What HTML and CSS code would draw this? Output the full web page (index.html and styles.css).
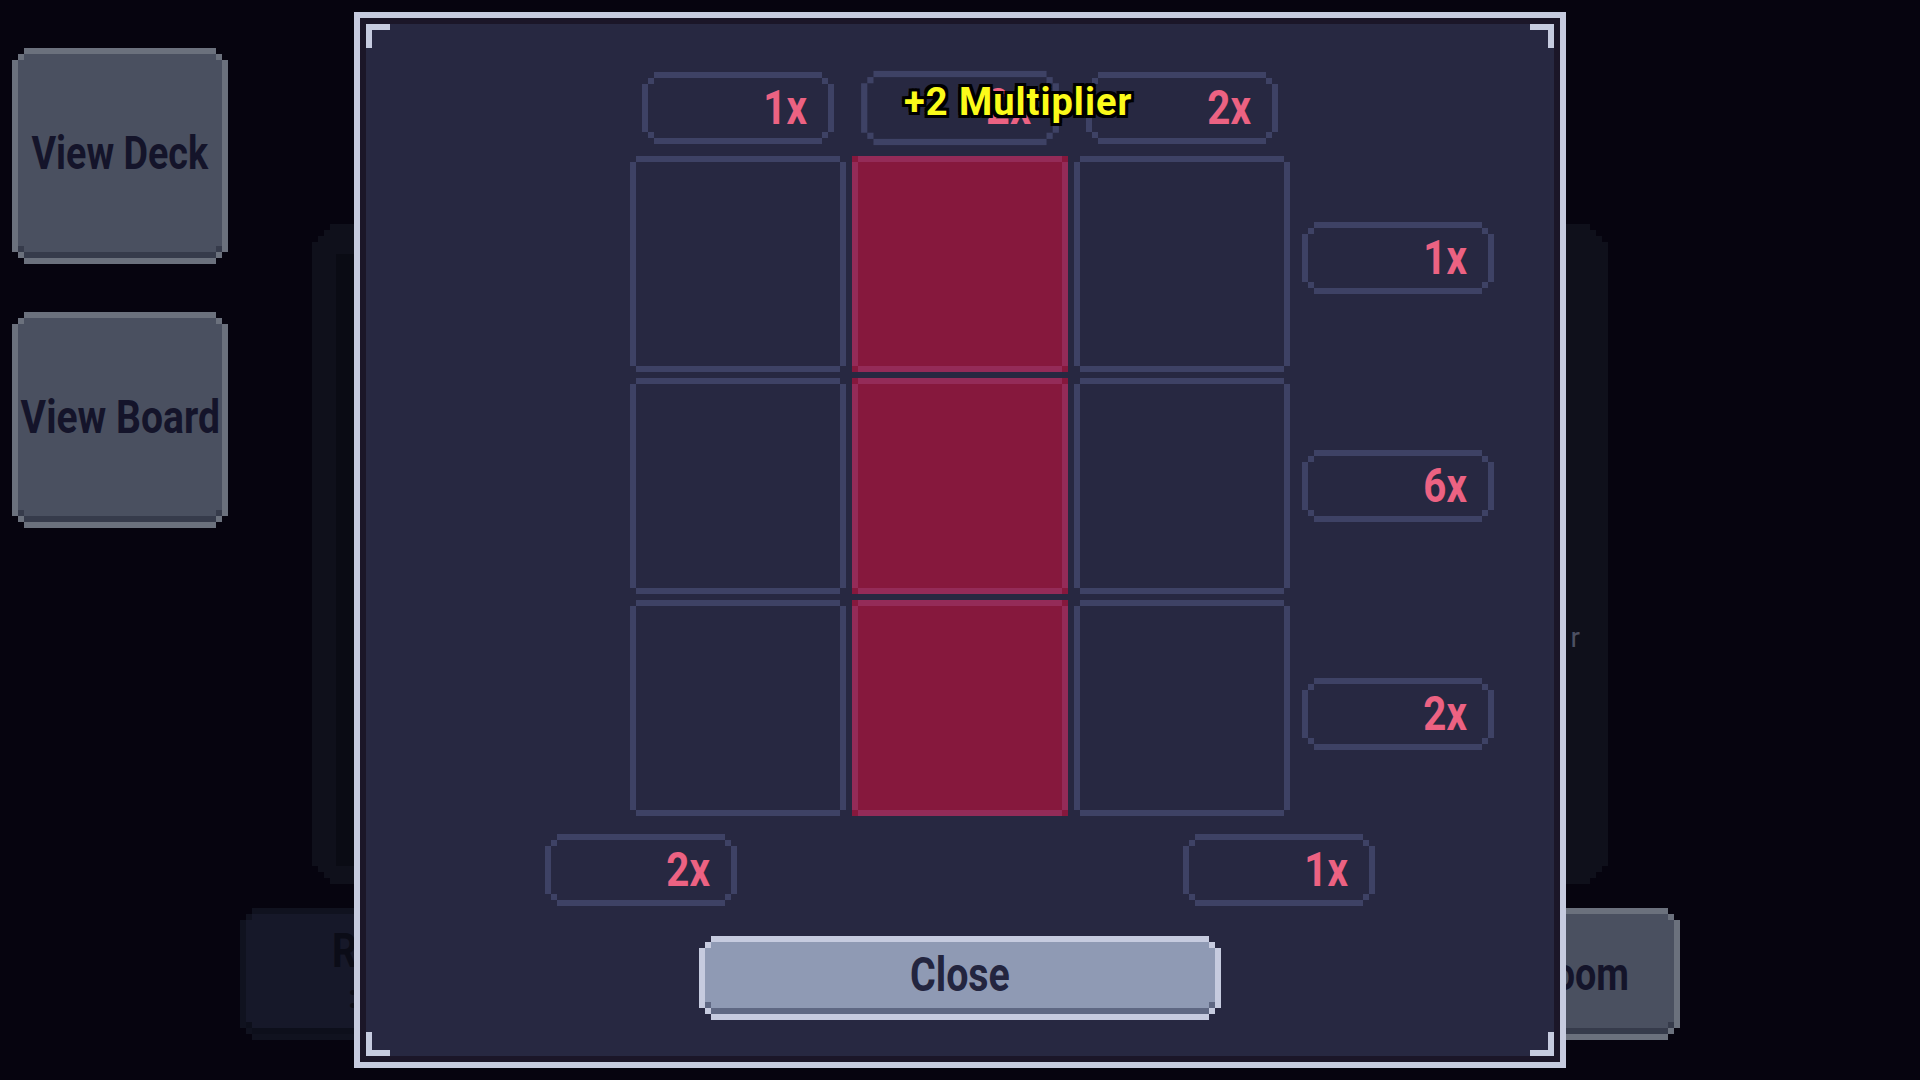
FILE: index.html
```html
<!DOCTYPE html>
<html lang="en">
<head>
<meta charset="utf-8">
<title>Board Multipliers</title>
<link rel="stylesheet" href="styles.css">
</head>
<body>
<div class="game">
  <aside class="sidebar">
    <div class="pxbtn side-btn"><span class="lbl">View Deck</span></div>
    <div class="pxbtn side-btn"><span class="lbl">View Board</span></div>
  </aside>
  <main class="center">
    <section class="panel">
      <div class="panel-slot"></div>
      <p class="panel-note">Multiplier</p>
    </section>
    <div class="actions">
      <div class="pxbtn act-btn act-left"><span class="lbl">Reroll</span><span class="sub">: 3 gold</span></div>
      <div class="pxbtn act-btn act-right"><span class="lbl">Next Room</span></div>
    </div>
  </main>
</div>

<div class="modal">
  <div class="board">
    <div class="pill top k1"><span class="mult">1x</span></div>
    <div class="pill top k2 pop"><span class="mult">2x</span></div>
    <div class="pill top k3"><span class="mult">2x</span></div>

    <div class="cell r1 k1"></div>
    <div class="cell red r1 k2"></div>
    <div class="cell r1 k3"></div>
    <div class="pill side r1 first"><span class="mult">1x</span></div>

    <div class="cell r2 k1"></div>
    <div class="cell red r2 k2"></div>
    <div class="cell r2 k3"></div>
    <div class="pill side r2"><span class="mult">6x</span></div>

    <div class="cell r3 k1"></div>
    <div class="cell red r3 k2"></div>
    <div class="cell r3 k3"></div>
    <div class="pill side r3 last"><span class="mult">2x</span></div>

    <div class="diag-row">
      <div class="pill"><span class="mult">2x</span></div>
      <div class="pill"><span class="mult">1x</span></div>
    </div>

    <div class="pxbtn close-btn"><span class="lbl">Close</span></div>

    <div class="float-text">+2 Multiplier</div>
  </div>
</div>
</body>
</html>
```

FILE: styles.css
```css
html, body {
  margin: 0;
  padding: 0;
}

body {
  width: 1920px;
  height: 1080px;
  overflow: hidden;
  position: relative;
  background: #06040f;
  font-family: Roboto, "Liberation Sans", sans-serif;
  font-weight: 700;
}

/* ---------- pixel button (stepped corners, bottom shade) ---------- */
.pxbtn {
  --b: #6b717d;
  --f: #4a5060;
  --d: #363b4b;
  box-sizing: border-box;
  display: flex;
  align-items: center;
  justify-content: center;
  padding-bottom: 6px;
  color: #14142a;
  font-size: 46px;
  line-height: 1;
  white-space: nowrap;
  background:
    linear-gradient(var(--b), var(--b)) left 12px top 0 / calc(100% - 24px) 6px no-repeat,
    linear-gradient(var(--b), var(--b)) left 12px bottom 0 / calc(100% - 24px) 6px no-repeat,
    linear-gradient(var(--b), var(--b)) left 0 top 12px / 6px calc(100% - 24px) no-repeat,
    linear-gradient(var(--b), var(--b)) right 0 top 12px / 6px calc(100% - 24px) no-repeat,
    linear-gradient(var(--b), var(--b)) left 6px top 6px / 6px 6px no-repeat,
    linear-gradient(var(--b), var(--b)) right 6px top 6px / 6px 6px no-repeat,
    linear-gradient(var(--b), var(--b)) left 6px bottom 6px / 6px 6px no-repeat,
    linear-gradient(var(--b), var(--b)) right 6px bottom 6px / 6px 6px no-repeat,
    linear-gradient(var(--d), var(--d)) left 12px bottom 6px / calc(100% - 24px) 6px no-repeat,
    linear-gradient(var(--d), var(--d)) left 6px bottom 12px / 6px 6px no-repeat,
    linear-gradient(var(--d), var(--d)) right 6px bottom 12px / 6px 6px no-repeat,
    linear-gradient(var(--f), var(--f)) left 12px top 6px / calc(100% - 24px) calc(100% - 12px) no-repeat,
    linear-gradient(var(--f), var(--f)) left 6px top 12px / calc(100% - 12px) calc(100% - 24px) no-repeat;
}

.lbl {
  display: inline-block;
  transform: scaleX(0.82);
}

/* ---------- background game screen ---------- */
.game {
  display: flex;
  height: 1080px;
}

.sidebar {
  width: 240px;
  box-sizing: border-box;
  padding: 48px 0 0 12px;
  display: flex;
  flex-direction: column;
  gap: 48px;
}

.side-btn {
  width: 216px;
  height: 216px;
}

.side-btn + .side-btn .lbl {
  transform: scaleX(0.85);
}

.center {
  width: 1440px;
  box-sizing: border-box;
  padding-top: 224px;
  display: flex;
  flex-direction: column;
}

.panel {
  margin: 0 0 0 72px;
  width: 1296px;
  height: 660px;
  box-sizing: border-box;
  padding: 30px 0 18px 24px;
  display: flex;
  align-items: flex-start;
  background: #0f101b;
  clip-path: polygon(
    18px 0, calc(100% - 18px) 0,
    calc(100% - 18px) 6px, calc(100% - 12px) 6px,
    calc(100% - 12px) 12px, calc(100% - 6px) 12px,
    calc(100% - 6px) 18px, 100% 18px,
    100% calc(100% - 18px), calc(100% - 6px) calc(100% - 18px),
    calc(100% - 6px) calc(100% - 12px), calc(100% - 12px) calc(100% - 12px),
    calc(100% - 12px) calc(100% - 6px), calc(100% - 18px) calc(100% - 6px),
    calc(100% - 18px) 100%, 18px 100%,
    18px calc(100% - 6px), 12px calc(100% - 6px),
    12px calc(100% - 12px), 6px calc(100% - 12px),
    6px calc(100% - 18px), 0 calc(100% - 18px),
    0 18px, 6px 18px,
    6px 12px, 12px 12px,
    12px 6px, 18px 6px);
}

.panel-slot {
  align-self: stretch;
  width: 600px;
  background: #0a0b14;
}

.panel-note {
  margin: 370px 23px 0 auto;
  font-size: 28px;
  line-height: 1;
  font-weight: 400;
  letter-spacing: 5px;
  color: #4d5062;
}

.actions {
  margin-top: 24px;
  display: flex;
  justify-content: space-between;
}

.act-btn {
  width: 300px;
  height: 132px;
}

.act-left {
  --b: #10121f;
  --f: #161829;
  --d: #0d0f1b;
  color: #0b0c17;
  flex-direction: column;
  align-items: flex-start;
  justify-content: flex-start;
  padding: 19px 0 0 92px;
}

.act-left .lbl {
  font-size: 48px;
  transform-origin: left center;
}

.act-left .sub {
  font-size: 34px;
  line-height: 1;
  margin-top: 4px;
  padding-left: 16px;
}

.act-right {
  justify-content: flex-end;
  padding: 0 51px 0 0;
}

.act-right .lbl {
  transform-origin: right center;
}

/* ---------- modal ---------- */
.modal {
  position: absolute;
  left: 354px;
  top: 12px;
  width: 1212px;
  height: 1056px;
  box-sizing: border-box;
  border: 6px solid #c6cbdf;
  box-shadow: inset 0 0 0 6px #1b1628;
  padding: 54px 0 0 270px;
  --l: #c6cbdf;
  background:
    linear-gradient(var(--l), var(--l)) left 6px top 6px / 24px 6px no-repeat,
    linear-gradient(var(--l), var(--l)) left 6px top 6px / 6px 24px no-repeat,
    linear-gradient(var(--l), var(--l)) right 6px top 6px / 24px 6px no-repeat,
    linear-gradient(var(--l), var(--l)) right 6px top 6px / 6px 24px no-repeat,
    linear-gradient(var(--l), var(--l)) left 6px bottom 6px / 24px 6px no-repeat,
    linear-gradient(var(--l), var(--l)) left 6px bottom 6px / 6px 24px no-repeat,
    linear-gradient(var(--l), var(--l)) right 6px bottom 6px / 24px 6px no-repeat,
    linear-gradient(var(--l), var(--l)) right 6px bottom 6px / 6px 24px no-repeat,
    #272841;
}

.board {
  position: relative;
  width: 864px;
  display: grid;
  grid-template-columns: 216px 6px 216px 6px 216px 12px 192px;
  grid-template-rows: 72px 12px 216px 6px 216px 6px 216px 18px 72px 30px 84px;
}

.k1 { grid-column: 1; }
.k2 { grid-column: 3; }
.k3 { grid-column: 5; }
.r1 { grid-row: 3; }
.r2 { grid-row: 5; }
.r3 { grid-row: 7; }

/* cells */
.cell {
  --c: #3e4265;
  width: 216px;
  height: 216px;
  background:
    linear-gradient(var(--c), var(--c)) left 6px top 0 / calc(100% - 12px) 6px no-repeat,
    linear-gradient(var(--c), var(--c)) left 6px bottom 0 / calc(100% - 12px) 6px no-repeat,
    linear-gradient(var(--c), var(--c)) left 0 top 6px / 6px calc(100% - 12px) no-repeat,
    linear-gradient(var(--c), var(--c)) right 0 top 6px / 6px calc(100% - 12px) no-repeat;
}

.cell.red {
  --c: #942b58;
  background-color: #86183d;
}

/* multiplier pills */
.pill {
  --c: #3e4265;
  width: 192px;
  height: 72px;
  box-sizing: border-box;
  display: flex;
  align-items: center;
  justify-content: flex-end;
  padding-right: 27px;
  background:
    linear-gradient(var(--c), var(--c)) left 12px top 0 / calc(100% - 24px) 6px no-repeat,
    linear-gradient(var(--c), var(--c)) left 12px bottom 0 / calc(100% - 24px) 6px no-repeat,
    linear-gradient(var(--c), var(--c)) left 0 top 12px / 6px calc(100% - 24px) no-repeat,
    linear-gradient(var(--c), var(--c)) right 0 top 12px / 6px calc(100% - 24px) no-repeat,
    linear-gradient(var(--c), var(--c)) left 6px top 6px / 6px 6px no-repeat,
    linear-gradient(var(--c), var(--c)) right 6px top 6px / 6px 6px no-repeat,
    linear-gradient(var(--c), var(--c)) left 6px bottom 6px / 6px 6px no-repeat,
    linear-gradient(var(--c), var(--c)) right 6px bottom 6px / 6px 6px no-repeat;
}

.mult {
  display: inline-block;
  font-size: 48px;
  line-height: 1;
  color: #ec6282;
  transform: scaleX(0.84);
  transform-origin: right center;
}

.pill.top {
  grid-row: 1;
  justify-self: center;
}

.pill.pop {
  transform: scale(1.03);
}

.pill.side {
  grid-column: 7;
  align-self: center;
}

.pill.side.first { margin-bottom: 12px; }
.pill.side.last { margin-top: 12px; }

.diag-row {
  grid-row: 9;
  grid-column: 1 / 6;
  margin: 0 -85px;
  display: flex;
  justify-content: space-between;
}

.close-btn {
  --b: #c6cbdf;
  --f: #8f9ab4;
  --d: #5f6883;
  grid-row: 11;
  grid-column: 1 / 6;
  justify-self: center;
  width: 522px;
  height: 84px;
  color: #23253f;
  font-size: 48px;
}

.float-text {
  position: absolute;
  left: 274px;
  top: 11px;
  font-size: 38px;
  line-height: 1;
  letter-spacing: 1px;
  white-space: nowrap;
  color: #fbfb1a;
  text-shadow:
    3px 0 0 #000, -3px 0 0 #000, 0 3px 0 #000, 0 -3px 0 #000,
    3px 3px 0 #000, -3px 3px 0 #000, 3px -3px 0 #000, -3px -3px 0 #000;
}
```
